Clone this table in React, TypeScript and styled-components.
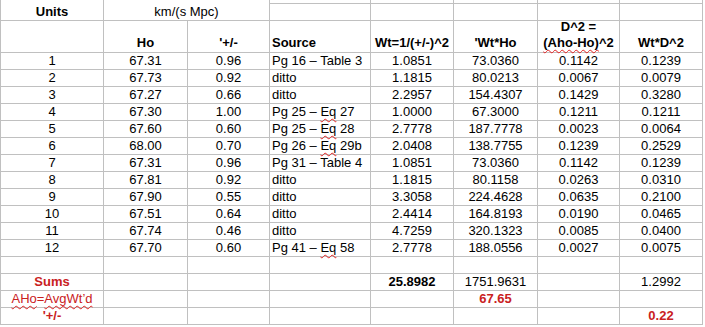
import React from "react";
import styled, { createGlobalStyle } from "styled-components";

const GRID = "#c0c0c0";
const RED = "#c9211e";

const GlobalStyle = createGlobalStyle`
   body {
      margin: 0;
      background: #fff;
      font-family: "Liberation Sans", Arial, sans-serif;
      font-size: 13px;
      color: #000;
   }
`;

const Sheet = styled.div`
   display: grid;
   grid-template-columns: 103px 84px 82px 101px 83px 84px 82px 83px;
   grid-template-rows: 21px 32px repeat(16, 17px);
   width: fit-content;
   border-left: 1px solid ${GRID};
`;

type TCell = {
   $left?: boolean;
   $bold?: boolean;
   $red?: boolean;
   $span?: number;
   $ruled?: boolean;
};

const Cell = styled.div<TCell>`
   box-sizing: border-box;
   display: flex;
   flex-direction: column;
   justify-content: flex-end;
   align-items: ${({ $left }) => ($left ? "flex-start" : "center")};
   grid-column: span ${({ $span }) => $span ?? 1};
   padding: 0 2px 1px;
   border-right: 1px solid ${GRID};
   border-bottom: 1px solid ${GRID};
   line-height: 15px;
   white-space: nowrap;
   font-weight: ${({ $bold }) => ($bold ? 700 : 400)};
   color: ${({ $red }) => ($red ? RED : "#000")};
   background: ${({ $ruled }) =>
      $ruled ? `linear-gradient(${GRID}, ${GRID}) 0 3px / 100% 1px no-repeat` : "none"};
`;

const Head = styled(Cell)`
   line-height: 16px;
   text-align: center;
`;

const Typo = styled.span`
   text-decoration: underline wavy #e02020;
   text-decoration-thickness: 1px;
   text-underline-offset: 2px;
   text-decoration-skip-ink: none;
`;

type TRow = [string, string, string, React.ReactNode, string, string, string, string];

const eq = (pg: string, n: string) => (
   <span>
      Pg {pg} – <Typo>Eq</Typo> {n}
   </span>
);

const rows: TRow[] = [
   ["1", "67.31", "0.96", "Pg 16 – Table 3", "1.0851", "73.0360", "0.1142", "0.1239"],
   ["2", "67.73", "0.92", "ditto", "1.1815", "80.0213", "0.0067", "0.0079"],
   ["3", "67.27", "0.66", "ditto", "2.2957", "154.4307", "0.1429", "0.3280"],
   ["4", "67.30", "1.00", eq("25", "27"), "1.0000", "67.3000", "0.1211", "0.1211"],
   ["5", "67.60", "0.60", eq("25", "28"), "2.7778", "187.7778", "0.0023", "0.0064"],
   ["6", "68.00", "0.70", eq("26", "29b"), "2.0408", "138.7755", "0.1239", "0.2529"],
   ["7", "67.31", "0.96", "Pg 31 – Table 4", "1.0851", "73.0360", "0.1142", "0.1239"],
   ["8", "67.81", "0.92", "ditto", "1.1815", "80.1158", "0.0263", "0.0310"],
   ["9", "67.90", "0.55", "ditto", "3.3058", "224.4628", "0.0635", "0.2100"],
   ["10", "67.51", "0.64", "ditto", "2.4414", "164.8193", "0.0190", "0.0465"],
   ["11", "67.74", "0.46", "ditto", "4.7259", "320.1323", "0.0085", "0.0400"],
   ["12", "67.70", "0.60", eq("41", "58"), "2.7778", "188.0556", "0.0027", "0.0075"],
];

const App: React.FC = () => {
   return (
      <>
         <GlobalStyle />
         <Sheet>
            {/* units row */}
            <Cell $bold>Units</Cell>
            <Cell $span={2}>km/(s Mpc)</Cell>
            <Cell $ruled />
            <Cell $ruled />
            <Cell $ruled />
            <Cell $ruled />
            <Cell $ruled />

            {/* column headings */}
            <Head $bold />
            <Head $bold>Ho</Head>
            <Head $bold>'+/-</Head>
            <Head $bold $left>Source</Head>
            <Head $bold>Wt=1/(+/-)^2</Head>
            <Head $bold>'Wt*Ho</Head>
            <Head $bold>
               <span>D^2 =</span>
               <span>
                  <Typo>(Aho-Ho)</Typo>^2
               </span>
            </Head>
            <Head $bold>Wt*D^2</Head>

            {rows.map((row, i) => (
               <React.Fragment key={i}>
                  {row.map((value, j) => (
                     <Cell key={j} $left={j === 3}>
                        {value}
                     </Cell>
                  ))}
               </React.Fragment>
            ))}

            {/* blank spacer row */}
            {Array.from({ length: 8 }, (_, j) => (
               <Cell key={`blank-${j}`} />
            ))}

            {/* totals */}
            <Cell $red $bold>Sums</Cell>
            <Cell />
            <Cell />
            <Cell />
            <Cell $bold>25.8982</Cell>
            <Cell>1751.9631</Cell>
            <Cell />
            <Cell>1.2992</Cell>

            <Cell $red>
               <span>
                  <Typo>AHo</Typo>=<Typo>AvgWt’d</Typo>
               </span>
            </Cell>
            <Cell />
            <Cell />
            <Cell />
            <Cell />
            <Cell $red $bold>67.65</Cell>
            <Cell />
            <Cell />

            <Cell $red $bold>'+/-</Cell>
            <Cell />
            <Cell />
            <Cell />
            <Cell />
            <Cell />
            <Cell />
            <Cell $red $bold>0.22</Cell>
         </Sheet>
      </>
   );
};

export default App;
